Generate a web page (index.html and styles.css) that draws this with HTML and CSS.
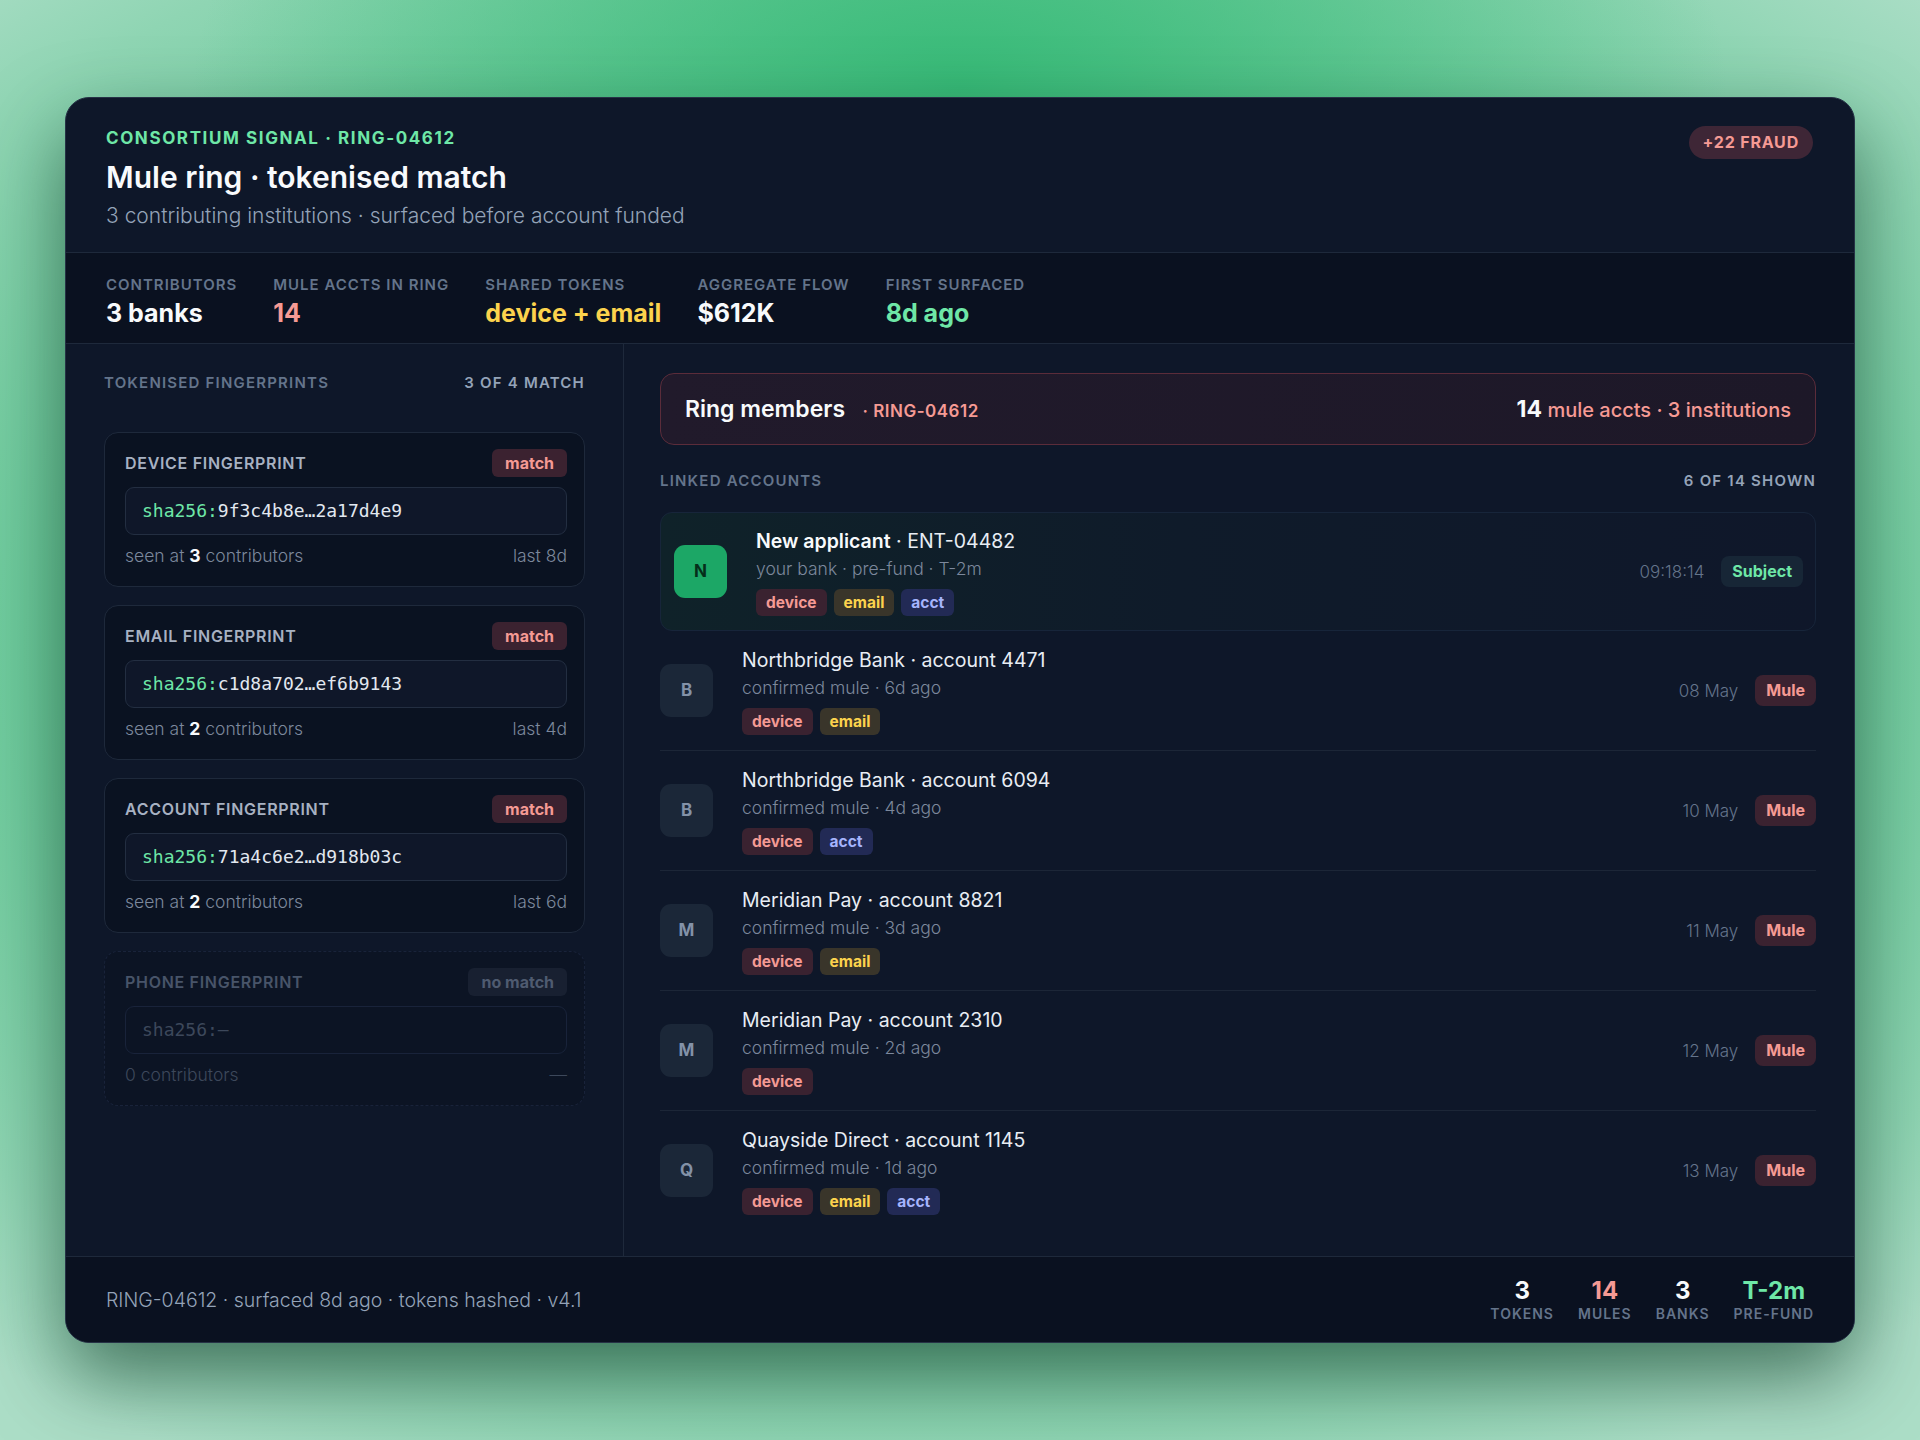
FILE: index.html
```html
<!DOCTYPE html>
<html lang="en">
<head>
    <meta charset="UTF-8">
    <meta name="viewport" content="width=device-width, initial-scale=1.0">
    <title>Consortium Signal · RING-04612</title>
    <link rel="stylesheet" href="styles.css">
</head>
<body>
    <div class="panel">
        <header class="panel-head">
            <div>
                <div class="eyebrow">Consortium signal · RING-04612</div>
                <h1>Mule ring · tokenised match</h1>
                <p class="subtitle">3 contributing institutions · surfaced before account funded</p>
            </div>
            <span class="fraud-pill">+22 FRAUD</span>
        </header>

        <div class="stats">
            <div class="stat">
                <div class="stat-label">Contributors</div>
                <div class="stat-value">3 banks</div>
            </div>
            <div class="stat">
                <div class="stat-label">Mule accts in ring</div>
                <div class="stat-value red">14</div>
            </div>
            <div class="stat">
                <div class="stat-label">Shared tokens</div>
                <div class="stat-value yellow">device + email</div>
            </div>
            <div class="stat">
                <div class="stat-label">Aggregate flow</div>
                <div class="stat-value">$612K</div>
            </div>
            <div class="stat">
                <div class="stat-label">First surfaced</div>
                <div class="stat-value green">8d ago</div>
            </div>
        </div>

        <div class="panel-body">
            <aside class="prints">
                <div class="section-head">
                    <span>Tokenised fingerprints</span>
                    <span class="section-count">3 of 4 match</span>
                </div>

                <div class="print">
                    <div class="print-top">
                        <span class="print-name">Device fingerprint</span>
                        <span class="badge badge-match">match</span>
                    </div>
                    <div class="hash"><span class="hash-algo">sha256:</span>9f3c4b8e…2a17d4e9</div>
                    <div class="print-meta">
                        <span>seen at <b>3</b> contributors</span>
                        <span>last 8d</span>
                    </div>
                </div>

                <div class="print">
                    <div class="print-top">
                        <span class="print-name">Email fingerprint</span>
                        <span class="badge badge-match">match</span>
                    </div>
                    <div class="hash"><span class="hash-algo">sha256:</span>c1d8a702…ef6b9143</div>
                    <div class="print-meta">
                        <span>seen at <b>2</b> contributors</span>
                        <span>last 4d</span>
                    </div>
                </div>

                <div class="print">
                    <div class="print-top">
                        <span class="print-name">Account fingerprint</span>
                        <span class="badge badge-match">match</span>
                    </div>
                    <div class="hash"><span class="hash-algo">sha256:</span>71a4c6e2…d918b03c</div>
                    <div class="print-meta">
                        <span>seen at <b>2</b> contributors</span>
                        <span>last 6d</span>
                    </div>
                </div>

                <div class="print print-off">
                    <div class="print-top">
                        <span class="print-name">Phone fingerprint</span>
                        <span class="badge badge-none">no match</span>
                    </div>
                    <div class="hash">sha256:—</div>
                    <div class="print-meta">
                        <span>0 contributors</span>
                        <span>—</span>
                    </div>
                </div>
            </aside>

            <section class="ring">
                <div class="ring-banner">
                    <div>
                        <span class="ring-title">Ring members</span>
                        <span class="ring-id">· RING-04612</span>
                    </div>
                    <div class="ring-total"><b>14</b> mule accts · 3 institutions</div>
                </div>

                <div class="section-head">
                    <span>Linked accounts</span>
                    <span class="section-count">6 of 14 shown</span>
                </div>

                <ul class="accounts">
                    <li class="account subject">
                        <span class="avatar avatar-new">N</span>
                        <div class="account-info">
                            <div class="account-name"><b>New applicant</b> · ENT-04482</div>
                            <div class="account-sub">your bank · pre-fund · T-2m</div>
                            <div class="tags">
                                <span class="tag tag-device">device</span>
                                <span class="tag tag-email">email</span>
                                <span class="tag tag-acct">acct</span>
                            </div>
                        </div>
                        <span class="account-date">09:18:14</span>
                        <span class="role role-subject">Subject</span>
                    </li>
                    <li class="account">
                        <span class="avatar">B</span>
                        <div class="account-info">
                            <div class="account-name">Northbridge Bank · account 4471</div>
                            <div class="account-sub">confirmed mule · 6d ago</div>
                            <div class="tags">
                                <span class="tag tag-device">device</span>
                                <span class="tag tag-email">email</span>
                            </div>
                        </div>
                        <span class="account-date">08 May</span>
                        <span class="role">Mule</span>
                    </li>
                    <li class="account">
                        <span class="avatar">B</span>
                        <div class="account-info">
                            <div class="account-name">Northbridge Bank · account 6094</div>
                            <div class="account-sub">confirmed mule · 4d ago</div>
                            <div class="tags">
                                <span class="tag tag-device">device</span>
                                <span class="tag tag-acct">acct</span>
                            </div>
                        </div>
                        <span class="account-date">10 May</span>
                        <span class="role">Mule</span>
                    </li>
                    <li class="account">
                        <span class="avatar">M</span>
                        <div class="account-info">
                            <div class="account-name">Meridian Pay · account 8821</div>
                            <div class="account-sub">confirmed mule · 3d ago</div>
                            <div class="tags">
                                <span class="tag tag-device">device</span>
                                <span class="tag tag-email">email</span>
                            </div>
                        </div>
                        <span class="account-date">11 May</span>
                        <span class="role">Mule</span>
                    </li>
                    <li class="account">
                        <span class="avatar">M</span>
                        <div class="account-info">
                            <div class="account-name">Meridian Pay · account 2310</div>
                            <div class="account-sub">confirmed mule · 2d ago</div>
                            <div class="tags">
                                <span class="tag tag-device">device</span>
                            </div>
                        </div>
                        <span class="account-date">12 May</span>
                        <span class="role">Mule</span>
                    </li>
                    <li class="account">
                        <span class="avatar">Q</span>
                        <div class="account-info">
                            <div class="account-name">Quayside Direct · account 1145</div>
                            <div class="account-sub">confirmed mule · 1d ago</div>
                            <div class="tags">
                                <span class="tag tag-device">device</span>
                                <span class="tag tag-email">email</span>
                                <span class="tag tag-acct">acct</span>
                            </div>
                        </div>
                        <span class="account-date">13 May</span>
                        <span class="role">Mule</span>
                    </li>
                </ul>
            </section>
        </div>

        <footer class="panel-foot">
            <span class="foot-note">RING-04612 · surfaced 8d ago · tokens hashed · v4.1</span>
            <div class="foot-stats">
                <div class="foot-stat">
                    <div class="foot-value">3</div>
                    <div class="foot-label">Tokens</div>
                </div>
                <div class="foot-stat">
                    <div class="foot-value red">14</div>
                    <div class="foot-label">Mules</div>
                </div>
                <div class="foot-stat">
                    <div class="foot-value">3</div>
                    <div class="foot-label">Banks</div>
                </div>
                <div class="foot-stat">
                    <div class="foot-value green">T-2m</div>
                    <div class="foot-label">Pre-fund</div>
                </div>
            </div>
        </footer>
    </div>
</body>
</html>
```

FILE: styles.css
```css
* {
    box-sizing: border-box;
}

body {
    margin: 0;
    min-height: 100vh;
    display: flex;
    align-items: center;
    justify-content: center;
    font-family: Inter, "Noto Sans", sans-serif;
    color: #f1f5f9;
    background:
        radial-gradient(ellipse 40% 28% at 50% 6%, #38bb78 0%, rgba(56, 187, 120, 0) 100%),
        radial-gradient(ellipse 75% 65% at 48% 45%, #45be80 0%, #5cc791 50%, #8fd5b3 85%, #acdec7 100%);
}

.panel {
    width: 1790px;
    background-color: #0e1729;
    border: 1px solid #263245;
    border-radius: 24px;
    overflow: hidden;
    box-shadow: 0 34px 80px rgba(10, 48, 32, 0.6);
}

/* header */
.panel-head {
    display: flex;
    justify-content: space-between;
    align-items: flex-start;
    padding: 28px 41px 22px 40px;
    border-bottom: 1px solid #1e293b;
}

.eyebrow {
    font-size: 17px;
    line-height: 24px;
    font-weight: 700;
    letter-spacing: 1.6px;
    text-transform: uppercase;
    color: #6ee7a7;
}

h1 {
    margin: 7px 0 0;
    font-size: 30px;
    line-height: 40px;
    font-weight: 600;
    color: #f8fafc;
}

.subtitle {
    margin: 5px 0 0;
    font-size: 21px;
    line-height: 28px;
    font-weight: 300;
    color: #94a3b8;
}

.fraud-pill {
    padding: 6px 14px;
    border-radius: 17px;
    background-color: #3e2636;
    color: #f59a94;
    font-size: 16px;
    line-height: 21px;
    font-weight: 700;
    letter-spacing: 0.8px;
}

/* stats strip */
.stats {
    display: flex;
    gap: 36px;
    padding: 22px 40px 16px;
    background-color: #0a1120;
    border-bottom: 1px solid #1e293b;
}

.stat-label {
    font-size: 15px;
    line-height: 20px;
    font-weight: 600;
    letter-spacing: 1px;
    text-transform: uppercase;
    color: #64748b;
}

.stat-value {
    margin-top: 4px;
    font-size: 25px;
    line-height: 28px;
    font-weight: 700;
    color: #f8fafc;
}

/* body */
.panel-body {
    display: grid;
    grid-template-columns: 558px 1fr;
}

.prints {
    padding: 29px 38px;
    border-right: 1px solid #1e293b;
}

.ring {
    padding: 29px 38px 26px 36px;
}

.section-head {
    display: flex;
    justify-content: space-between;
    font-size: 15px;
    line-height: 20px;
    font-weight: 600;
    letter-spacing: 1.2px;
    text-transform: uppercase;
    color: #64748b;
}

.section-count {
    color: #94a3b8;
}

.prints .section-head {
    margin-bottom: 39px;
}

/* fingerprint cards */
.print {
    margin-bottom: 18px;
    padding: 16px 17px 18px 20px;
    background-color: #0a1221;
    border: 1px solid #1e293b;
    border-radius: 14px;
}

.print-top {
    display: flex;
    justify-content: space-between;
    align-items: center;
}

.print-name {
    font-size: 16px;
    font-weight: 600;
    letter-spacing: 0.7px;
    text-transform: uppercase;
    color: #a7b1c2;
}

.badge {
    height: 28px;
    padding: 0 13px;
    border-radius: 6px;
    font-size: 16px;
    line-height: 28px;
    font-weight: 700;
}

.badge-match {
    background-color: #3b2230;
    color: #f59a94;
}

.badge-none {
    background-color: #182031;
    color: #4f5b70;
}

.hash {
    margin-top: 10px;
    height: 48px;
    padding: 0 16px;
    background-color: #0f1729;
    border: 1px solid #232e41;
    border-radius: 9px;
    font-family: "DejaVu Sans Mono", monospace;
    font-size: 18px;
    line-height: 46px;
    color: #e2e8f0;
}

.hash-algo {
    color: #6ee7a7;
}

.print-meta {
    display: flex;
    justify-content: space-between;
    margin-top: 9px;
    font-size: 17.5px;
    line-height: 24px;
    font-weight: 300;
    color: #7c889c;
}

.print-meta b {
    font-weight: 700;
    color: #f8fafc;
}

.print-off {
    border-style: dashed;
    border-color: #19233a;
    background-color: #0c1424;
}

.print-off .print-name {
    color: #485469;
}

.print-off .hash,
.print-off .print-meta {
    color: #3d485b;
}

.print-off .hash {
    background-color: #0c1424;
    border-color: #19233a;
}

/* ring banner */
.ring-banner {
    display: flex;
    justify-content: space-between;
    align-items: center;
    height: 72px;
    padding: 0 24px;
    border: 1px solid #5b2c3a;
    border-radius: 14px;
    background: linear-gradient(90deg, #211a2b, #1d1828);
}

.ring-title {
    font-size: 23px;
    font-weight: 600;
    color: #f8fafc;
    margin-right: 13px;
}

.ring-id {
    font-size: 17px;
    font-weight: 600;
    letter-spacing: 0.5px;
    color: #f59a94;
}

.ring-total {
    font-size: 20px;
    font-weight: 500;
    color: #f59a94;
}

.ring-total b {
    font-size: 23px;
    font-weight: 700;
    color: #f8fafc;
}

.ring .section-head {
    margin: 26px 0 21px;
}

/* linked accounts */
.accounts {
    list-style: none;
    margin: 0;
    padding: 0;
}

.account {
    display: flex;
    align-items: center;
    padding: 15px 0;
    border-bottom: 1px solid #1c2637;
}

.account:last-child {
    border-bottom: none;
}

.account.subject {
    padding: 14px 12px 14px 13px;
    border: 1px solid #17253a;
    border-radius: 12px;
    background: linear-gradient(90deg, #0f2229 0%, #0f1b2a 45%, #0f172a 100%);
}

.avatar {
    flex: none;
    width: 53px;
    height: 53px;
    margin-right: 29px;
    border-radius: 11px;
    background-color: #1b2738;
    color: #8392a8;
    font-size: 17px;
    font-weight: 700;
    line-height: 53px;
    text-align: center;
}

.avatar-new {
    background-color: #1ca766;
    color: #052e1a;
}

.account-info {
    flex: 1;
}

.account-name {
    font-size: 19.5px;
    line-height: 28px;
    color: #e8edf4;
}

.account-name b {
    font-weight: 600;
    color: #f8fafc;
}

.account-sub {
    margin-top: 1px;
    font-size: 17.5px;
    line-height: 25px;
    font-weight: 300;
    color: #7c889c;
}

.tags {
    display: flex;
    gap: 7px;
    margin-top: 8px;
}

.tag {
    height: 27px;
    padding: 0 10px;
    border-radius: 6px;
    font-size: 15.5px;
    line-height: 27px;
    font-weight: 700;
}

.tag-device {
    background-color: #3a2230;
    color: #f59a94;
}

.tag-email {
    background-color: #39352a;
    color: #fcd34d;
}

.tag-acct {
    background-color: #222a55;
    color: #a5b4fc;
}

.account-date {
    margin-right: 17px;
    font-size: 17px;
    font-weight: 300;
    color: #64748b;
}

.role {
    height: 31px;
    padding: 0 11px;
    border-radius: 8px;
    background-color: #3b2230;
    color: #f59a94;
    font-size: 16px;
    line-height: 31px;
    font-weight: 700;
}

.role-subject {
    background-color: #172636;
    color: #6ee7a7;
}

/* footer */
.panel-foot {
    display: flex;
    justify-content: space-between;
    align-items: center;
    height: 86px;
    padding: 0 40px;
    background-color: #0a1120;
    border-top: 1px solid #1e293b;
}

.foot-note {
    font-size: 19.5px;
    font-weight: 300;
    color: #94a3b8;
}

.foot-stats {
    display: flex;
    gap: 24px;
}

.foot-stat {
    text-align: center;
}

.foot-value {
    font-size: 24px;
    line-height: 28px;
    font-weight: 700;
    color: #f8fafc;
}

.foot-label {
    font-size: 14px;
    line-height: 18px;
    font-weight: 600;
    letter-spacing: 1px;
    text-transform: uppercase;
    color: #64748b;
}

/* accent colours, after the base rules so they win */
.red { color: #f59a94; }
.yellow { color: #fcd34d; }
.green { color: #6ee7a7; }
```
